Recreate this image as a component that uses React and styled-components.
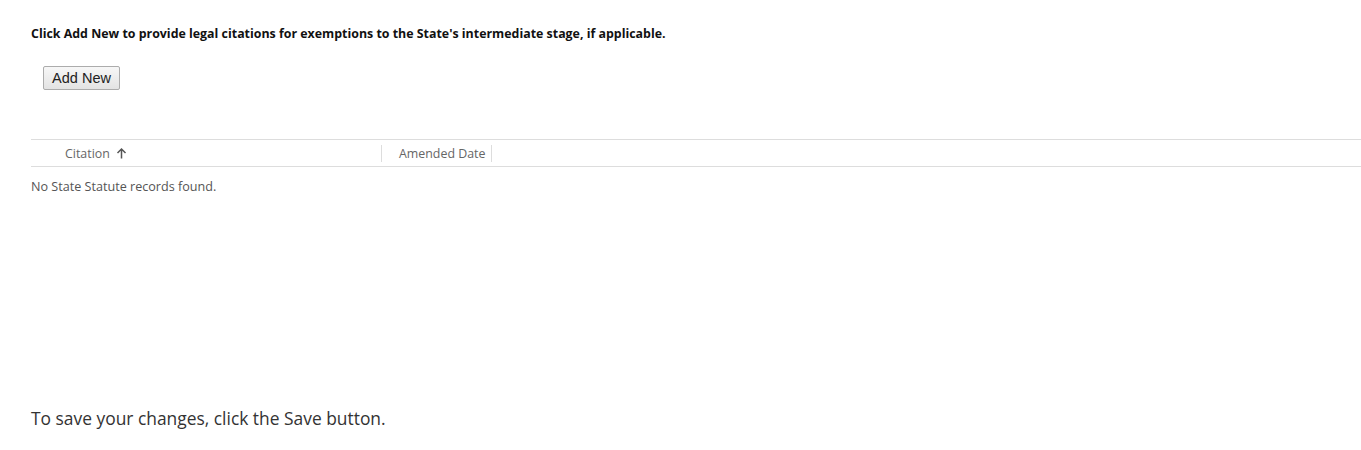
import React from 'react';
import styled, { createGlobalStyle } from 'styled-components';

const GlobalStyle = createGlobalStyle`
  html, body {
    margin: 0;
    padding: 0;
    background: #fff;
  }
  body {
    font-family: "Open Sans", "Noto Sans", sans-serif;
    color: #222;
  }
`;

const Page = styled.div`
  width: 1361px;
  height: 450px;
  display: flex;
  flex-direction: column;
  padding-left: 31px;
  box-sizing: border-box;
`;

const Instruction = styled.p`
  margin: 26px 0 0;
  font-size: 12.4px;
  font-weight: 700;
  color: #111;
  line-height: 16px;
`;

const Toolbar = styled.div`
  display: flex;
  padding: 24px 0 0 12px;
`;

const Button = styled.button`
  width: 77px;
  height: 24px;
  padding: 0;
  font-family: "Liberation Sans", Arial, sans-serif;
  font-size: 14.5px;
  color: #222;
  background: linear-gradient(#f7f7f7, #e3e3e3);
  border: 1px solid #acacac;
  border-radius: 2px;
`;

const Grid = styled.div`
  margin-top: 49px;
  display: flex;
  flex-direction: column;
`;

const HeaderRow = styled.div`
  display: flex;
  align-items: center;
  height: 26px;
  border-top: 1px solid #ddd;
  border-bottom: 1px solid #ddd;
`;

const HeaderCell = styled.div`
  display: flex;
  align-items: center;
  gap: 6px;
  width: ${p => p.$width};
  padding-left: ${p => p.$pad};
  box-sizing: border-box;
  font-size: 12.4px;
  color: #666;
  white-space: nowrap;
`;

const Divider = styled.span`
  width: 1px;
  height: 17px;
  background: #ddd;
  margin-left: ${p => p.$gap};
`;

const Empty = styled.div`
  padding-top: 11px;
  font-size: 12.6px;
  color: #555;
`;

const Footer = styled.p`
  margin: auto 0 20px;
  font-size: 17.4px;
  color: #333;
`;

const ArrowUp = () => (
  <svg width="11" height="12" viewBox="0 0 11 12" fill="none" stroke="#555" strokeWidth="1.5">
    <path d="M5.5 11.5V2M1.5 6l4-4 4 4" />
  </svg>
);

export default function App() {
  return (
    <Page>
      <GlobalStyle />
      <Instruction>
        Click Add New to provide legal citations for exemptions to the State's intermediate stage, if applicable.
      </Instruction>
      <Toolbar>
        <Button>Add New</Button>
      </Toolbar>
      <Grid>
        <HeaderRow>
          <HeaderCell $width="350px" $pad="34px">
            Citation <ArrowUp />
          </HeaderCell>
          <Divider $gap="0px" />
          <HeaderCell $width="auto" $pad="17px">
            Amended Date
          </HeaderCell>
          <Divider $gap="6px" />
        </HeaderRow>
        <Empty>No State Statute records found.</Empty>
      </Grid>
      <Footer>To save your changes, click the Save button.</Footer>
    </Page>
  );
}
